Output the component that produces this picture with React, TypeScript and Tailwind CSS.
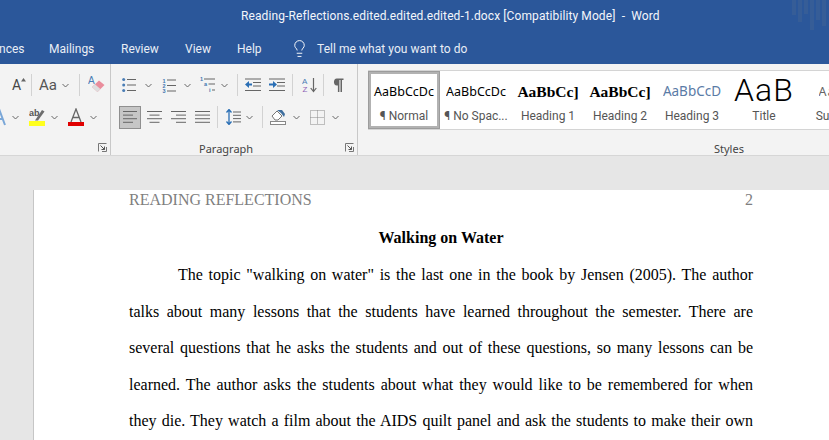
import { Lightbulb } from "lucide-react";

const ui = "font-['Roboto','Noto_Sans',sans-serif]";
const sampleFont = "font-['Noto_Sans',sans-serif]";

const Chev = ({ className = "" }: { className?: string }) => (
  <svg width="7" height="5" viewBox="0 0 7 5" className={className}>
    <path d="M0.5 1 L3.5 4 L6.5 1" fill="none" stroke="#666" strokeWidth="1" />
  </svg>
);

const Sep = ({ className = "" }: { className?: string }) => <div className={`w-px h-[22px] shrink-0 bg-[#d2d2d2] ${className}`} />;

const Launcher = () => (
  <svg width="9" height="9" viewBox="0 0 9 9">
    <path d="M0.5 8.5 V0.5 H8.5 M8.5 4 V8.5 H4" fill="none" stroke="#777" />
    <path d="M2.5 2.5 L6.5 6.5 M6.5 3.5 V6.5 H3.5" fill="none" stroke="#555" />
  </svg>
);

const Lines = ({ rows }: { rows: [number, number][] }) => (
  <svg width="15" height="14" viewBox="0 0 15 14" className="block">
    {rows.map(([x, w], i) => (
      <rect key={i} x={x} y={1 + i * 3.6} width={w} height="1" fill="#666" />
    ))}
  </svg>
);

const Bullets = () => (
  <svg width="14" height="15" viewBox="0 0 14 15" className="block">
    {[1.5, 7, 12.5].map((y) => (
      <g key={y}>
        <circle cx="1.7" cy={y} r="1.5" fill="#4a7db5" />
        <rect x="5" y={y - 0.5} width="9" height="1" fill="#666" />
      </g>
    ))}
  </svg>
);

const Numbered = () => (
  <svg width="14" height="15" viewBox="0 0 14 15" className="block">
    {["1", "2", "3"].map((n, i) => (
      <g key={n}>
        <text x="0.5" y={4.5 + i * 5.3} fontSize="5.5" fontWeight="700" fill="#3f76b0" fontFamily="Liberation Sans">{n}</text>
        <rect x="5" y={1.5 + i * 5.5} width="9" height="1" fill="#666" />
      </g>
    ))}
  </svg>
);

const Multilevel = () => (
  <svg width="16" height="16" viewBox="0 0 16 16" className="block">
    <text x="0" y="4" fontSize="5.5" fontWeight="700" fill="#3f76b0" fontFamily="Liberation Sans">1</text>
    <rect x="4" y="1.5" width="11" height="1" fill="#666" />
    <text x="4" y="9" fontSize="5.5" fontWeight="700" fill="#3f76b0" fontFamily="Liberation Sans">a</text>
    <rect x="8.5" y="6.5" width="6.5" height="1" fill="#666" />
    <text x="9" y="15" fontSize="5.5" fontWeight="700" fill="#3f76b0" fontFamily="Liberation Sans">i</text>
    <rect x="12" y="12.5" width="3" height="1" fill="#666" />
  </svg>
);

const Indent = ({ flip }: { flip?: boolean }) => (
  <svg width="17" height="14" viewBox="0 0 17 14" className="block">
    <rect x="0" y="0.5" width="16" height="1" fill="#666" />
    <rect x="8" y="4" width="8" height="1" fill="#666" />
    <rect x="8" y="7.5" width="8" height="1" fill="#666" />
    <rect x="0" y="12" width="16" height="1" fill="#666" />
    {flip ? (
      <path d="M0 5.5 H4 V3 L8 6.5 L4 10 V7.5 H0 Z" fill="#2a6fb5" />
    ) : (
      <path d="M7 5.5 H4 V3 L0 6.5 L4 10 V7.5 H7 Z" fill="#2a6fb5" />
    )}
  </svg>
);

const Sort = () => (
  <svg width="15" height="16" viewBox="0 0 15 16" className="block">
    <path d="M11.5 1 V14 M8.7 11 L11.5 14.5 L14.3 11" fill="none" stroke="#666" strokeWidth="1.2" />
    <text x="0" y="7" fontSize="8" fill="#4a7db5" fontFamily="Liberation Sans">A</text>
    <text x="0.5" y="15" fontSize="8" fill="#8e5fb5" fontFamily="Liberation Sans">Z</text>
  </svg>
);

const Pilcrow = () => (
  <svg width="11" height="14" viewBox="0 0 11 14" className="block">
    <path d="M3.8 0.5 H10.5 V2 H9 V14 H7.5 V2 H6.4 V14 H4.9 V7.5 H3.8 C0 7.5 0 0.5 3.8 0.5 Z" fill="#666" />
  </svg>
);

const LineSpacing = () => (
  <svg width="15" height="16" viewBox="0 0 15 16" className="block">
    <path d="M3 0.5 V15.5 M0.5 3.5 L3 0.5 L5.5 3.5 M0.5 12.5 L3 15.5 L5.5 12.5" fill="none" stroke="#2a6fb5" strokeWidth="1.3" />
    {[3, 6.3, 9.6, 12.9].map((y) => (
      <rect key={y} x="7" y={y - 0.5} width="8" height="1" fill="#666" />
    ))}
  </svg>
);

const Shading = () => (
  <svg width="17" height="16" viewBox="0 0 17 16" className="block">
    <path d="M2 7 L7 2 L12 7 L8 11 H5 Z" fill="#fff" stroke="#777" />
    <path d="M7 1 L12 1 L15 5 L14 8 L11 4 Z" fill="#3f6f9f" />
    <rect x="0.5" y="12.5" width="15" height="3" fill="#fff" stroke="#888" />
  </svg>
);

const Borders = () => (
  <svg width="15" height="15" viewBox="0 0 15 15" className="block">
    <path d="M0.5 0.5 H14.5 V14.5 H0.5 Z M7.5 0.5 V14.5 M0.5 7.5 H14.5" fill="none" stroke="#888" strokeDasharray="1 1" />
  </svg>
);

const Eraser = () => (
  <svg width="17" height="18" viewBox="0 0 17 18" className="block">
    <text x="0" y="8" fontSize="10" fill="#4a7db5" fontFamily="Liberation Sans">A</text>
    <path d="M4 11 L11 4.5 L16.5 9 L9.5 16 Z" fill="#ea8d9c" />
    <path d="M4 11 L7 8.2 L12.3 13 L9.5 16 Z" fill="#dedede" />
  </svg>
);

const Highlight = () => (
  <svg width="16" height="18" viewBox="0 0 16 18" className="block">
    <text x="0" y="8" fontSize="9" fontWeight="700" fill="#555" fontFamily="Liberation Sans">ab</text>
    <path d="M6 12.5 L13 2 L15.5 3.5 L9 12.5 Z" fill="#6d6d6d" />
    <rect x="0" y="13" width="16" height="5" fill="#ffff1e" />
  </svg>
);

const FontColor = () => (
  <svg width="16" height="18" viewBox="0 0 16 18" className="block">
    <path d="M3 14 L8 1 L13 14 M4.8 9.5 H11.2" fill="none" stroke="#666" strokeWidth="1.3" />
    <rect x="0" y="14" width="16" height="4" fill="#e00000" />
  </svg>
);

const TextEffect = () => (
  <svg width="14" height="18" viewBox="0 0 14 18" className="block ml-[-8px]">
    <path d="M1 17 L7 1 L13 17 M3.5 11 H10.5" fill="none" stroke="#7aa7d8" strokeWidth="2" />
  </svg>
);

const Style = ({ sample, label, cls }: { sample: string; label: string; cls: string }) => (
  <div className="w-[72px] h-[58px] flex flex-col items-center overflow-hidden shrink-0">
    <div className={`h-[36px] pt-[6px] flex items-center overflow-hidden whitespace-nowrap leading-none ${cls}`}>{sample}</div>
    <div className="text-[12px] leading-[18px] text-[#555] whitespace-nowrap">{label}</div>
  </div>
);

const lines = [
  "talks about many lessons that the students have learned throughout the semester. There are",
  "several questions that he asks the students and out of these questions, so many lessons can be",
  "learned. The author asks the students about what they would like to be remembered for when",
  "they die. They watch a film about the AIDS quilt panel and ask the students to make their own",
];

export default function App() {
  return (
    <div className="w-[829px] h-[440px] overflow-hidden flex flex-col bg-[#e6e6e6] font-['Liberation_Serif',serif]">
      <header className={`relative bg-[#2b579a] text-white h-[64px] shrink-0 ${ui}`}>
        <div className="h-[32px] flex items-center pl-[241px] text-[12px] tracking-[0.1px] text-[#f3f6fb] whitespace-nowrap">
          Reading-Reflections.edited.edited.edited-1.docx [Compatibility Mode]&nbsp; -&nbsp; Word
        </div>
        <nav className="h-[32px] pt-[1px] flex items-center text-[12px] text-[#e9eef6] whitespace-nowrap">
          <span className="ml-[-1px] w-[50px]">nces</span>
          <span className="w-[72px]">Mailings</span>
          <span className="w-[64px]">Review</span>
          <span className="w-[52px]">View</span>
          <span className="w-[53px]">Help</span>
          <Lightbulb size={19} strokeWidth={1.2} className="text-white" />
          <span className="ml-[8px] tracking-[0.05px]">Tell me what you want to do</span>
        </nav>
        <svg width="37" height="32" viewBox="0 0 37 32" className="absolute right-0 top-0 opacity-25">
          {[[0, 15], [6, 22], [12, 14], [18, 30], [24, 20], [30, 26]].map(([x, h]) => (
            <rect key={x} x={x} y="0" width="4" height={h} fill="#5a6f90" />
          ))}
        </svg>
      </header>

      <section className={`h-[92px] shrink-0 bg-[#f3f3f3] border-b border-[#d6d6d6] flex ${ui} text-[#444]`}>
        <div className="w-[111px] shrink-0 border-r border-[#c8c8c8] flex flex-col">
          <div className="h-[38px] pt-[4px] flex items-center">
            <div className="ml-[12px] w-[13px] flex items-end">
              <span className="text-[14px] leading-none">A</span>
              <svg width="5" height="4" viewBox="0 0 5 4" className="mb-[10px] shrink-0"><path d="M0 3.5 L2.5 0 L5 3.5 Z" fill="#666" /></svg>
            </div>
            <Sep className="ml-[6px]" />
            <span className="ml-[7px] text-[15px] leading-none text-[#555]">Aa</span>
            <Chev className="ml-[5px]" />
            <Sep className="ml-[10px]" />
            <div className="ml-[8px]"><Eraser /></div>
          </div>
          <div className="h-[30px] flex items-center">
            <TextEffect />
            <Chev className="ml-[6px]" />
            <div className="ml-[10px]"><Highlight /></div>
            <Chev className="ml-[6px]" />
            <div className="ml-[10px]"><FontColor /></div>
            <Chev className="ml-[6px]" />
          </div>
          <div className="flex-1 flex justify-end items-end pr-[3px] pb-[3px]"><Launcher /></div>
        </div>

        <div className="w-[247px] shrink-0 border-r border-[#c8c8c8] flex flex-col">
          <div className="h-[38px] pt-[4px] flex items-center">
            <div className="ml-[11px]"><Bullets /></div>
            <Chev className="ml-[9px]" />
            <div className="ml-[10px]"><Numbered /></div>
            <Chev className="ml-[8px]" />
            <div className="ml-[9px]"><Multilevel /></div>
            <Chev className="ml-[5px]" />
            <Sep className="ml-[9px]" />
            <div className="ml-[7px]"><Indent /></div>
            <div className="ml-[7px]"><Indent flip /></div>
            <Sep className="ml-[6px]" />
            <div className="ml-[9px]"><Sort /></div>
            <Sep className="ml-[6px]" />
            <div className="ml-[9px]"><Pilcrow /></div>
          </div>
          <div className="h-[30px] flex items-center">
            <div className="ml-[8px] w-[22px] h-[23px] bg-[#c6c6c6] border border-[#8f8f8f] flex items-center justify-center">
              <Lines rows={[[0, 14], [0, 10], [0, 14], [0, 10]]} />
            </div>
            <div className="ml-[6px]"><Lines rows={[[0, 15], [2.5, 10], [0, 15], [2.5, 10]]} /></div>
            <div className="ml-[9px]"><Lines rows={[[0, 15], [5, 10], [0, 15], [5, 10]]} /></div>
            <div className="ml-[9px]"><Lines rows={[[0, 15], [0, 15], [0, 15], [0, 15]]} /></div>
            <Sep className="ml-[7px]" />
            <div className="ml-[8px]"><LineSpacing /></div>
            <Chev className="ml-[5px]" />
            <Sep className="ml-[9px]" />
            <div className="ml-[7px]"><Shading /></div>
            <Chev className="ml-[6px]" />
            <div className="ml-[10px]"><Borders /></div>
            <Chev className="ml-[7px]" />
          </div>
          <div className="flex-1 flex items-end justify-between pr-[3px] pb-[1px]">
            <span className={`ml-[88px] text-[11px] leading-none ${sampleFont}`}>Paragraph</span>
            <div className="mb-[2px]"><Launcher /></div>
          </div>
        </div>

        <div className="flex-1 min-w-0 flex flex-col">
          <div className="mt-[6px] ml-[10px] h-[60px] bg-white border-y border-[#d4d4d4] flex items-stretch overflow-hidden">
            <div className="w-[72px] shrink-0 h-[58px] border-[3px] border-[#b2b2b2] outline outline-1 outline-[#9c9c9c] outline-offset-[-1px] flex flex-col items-center overflow-hidden">
              <div className={`h-[33px] pt-[3px] flex items-center text-[12.5px] leading-none text-black whitespace-nowrap ${sampleFont}`}>AaBbCcDc</div>
              <div className="text-[12px] leading-[18px] text-[#555] whitespace-nowrap">¶ Normal</div>
            </div>
            <Style sample="AaBbCcDc" label="¶ No Spac..." cls={`text-[12.5px] text-black ${sampleFont}`} />
            <Style sample="AaBbCc]" label="Heading 1" cls="font-['Liberation_Serif',serif] font-bold text-[15.5px] text-black" />
            <Style sample="AaBbCc]" label="Heading 2" cls="font-['Liberation_Serif',serif] font-bold text-[15.5px] text-black" />
            <Style sample="AaBbCcD" label="Heading 3" cls={`text-[13.5px] text-[#5a7ba6] ${sampleFont}`} />
            <Style sample="AaB" label="Title" cls="text-[32px] pb-[4px] tracking-[1px] text-black font-light" />
            <Style sample="AaBb" label="Subtitle" cls={`text-[12.5px] text-[#666] tracking-[1px] ${sampleFont}`} />
          </div>
          <div className="flex-1 flex items-end pb-[1px]">
            <span className={`ml-[356px] text-[11px] leading-none ${sampleFont}`}>Styles</span>
          </div>
        </div>
      </section>

      <main className="flex-1 min-h-0 pt-[34px] pl-[33px]">
        <article className="h-[260px] bg-white border-l border-[#c6c6c6] pl-[95px] pr-[76px] text-[16px] text-black">
          <div className="h-[19px] flex justify-between items-center text-[#7f7f7f] leading-none">
            <span>READING REFLECTIONS</span>
            <span>2</span>
          </div>
          <h1 className="mt-[19px] h-[20px] text-center font-bold leading-[20px]">Walking on Water</h1>
          <p className="mt-[9px] leading-[36.6px] indent-[49px] text-justify [text-align-last:justify]">
            The topic "walking on water" is the last one in the book by Jensen (2005). The author
          </p>
          {lines.map((l) => (
            <p key={l} className="leading-[36.6px] whitespace-nowrap text-justify [text-align-last:justify]">{l}</p>
          ))}
        </article>
      </main>
    </div>
  );
}
